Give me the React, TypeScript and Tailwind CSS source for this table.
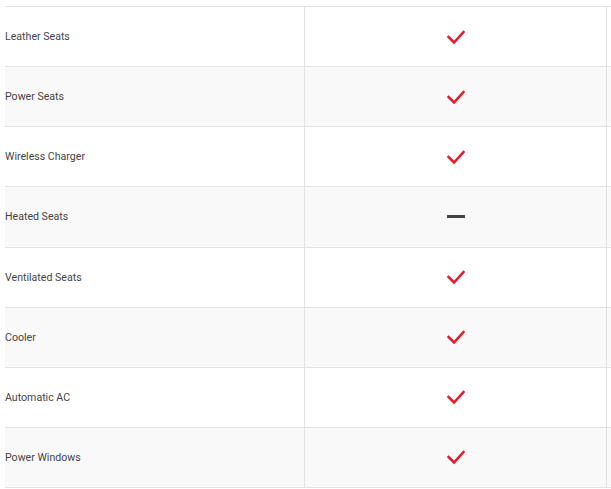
const rows: { label: string; has: boolean }[] = [
  { label: 'Leather Seats', has: true },
  { label: 'Power Seats', has: true },
  { label: 'Wireless Charger', has: true },
  { label: 'Heated Seats', has: false },
  { label: 'Ventilated Seats', has: true },
  { label: 'Cooler', has: true },
  { label: 'Automatic AC', has: true },
  { label: 'Power Windows', has: true },
];

function Check() {
  return (
    <svg width="18" height="14" viewBox="0 0 18 14" fill="none" aria-hidden="true">
      <path d="M1.5 7l5.5 5.5L16.5 2" stroke="#e8192c" strokeWidth="2.5" strokeLinecap="square" />
    </svg>
  );
}

export default function App() {
  return (
    <div className="h-[489px] w-[611px] overflow-hidden bg-white pl-[5px] pt-[6px] font-['Roboto',sans-serif]">
      <div className="w-[800px] border-t border-[#e2e2e2]">
        {rows.map((r, i) => (
          <div
            key={r.label}
            className={`flex h-[60.125px] border-b border-[#e2e2e2] ${i % 2 === 1 ? 'bg-[#f9f9f9]' : 'bg-white'}`}
          >
            <div className="flex w-[300px] items-center border-r border-[#e2e2e2] pt-[1px] text-[10.6px] text-[#444]">
              {r.label}
            </div>
            <div className="flex w-[302px] items-center justify-center border-r border-[#e2e2e2] pl-[1px]">
              {r.has ? <Check /> : <span className="block h-[3px] w-[18px] bg-[#444]" />}
            </div>
            <div className="flex-1" />
          </div>
        ))}
      </div>
    </div>
  );
}
